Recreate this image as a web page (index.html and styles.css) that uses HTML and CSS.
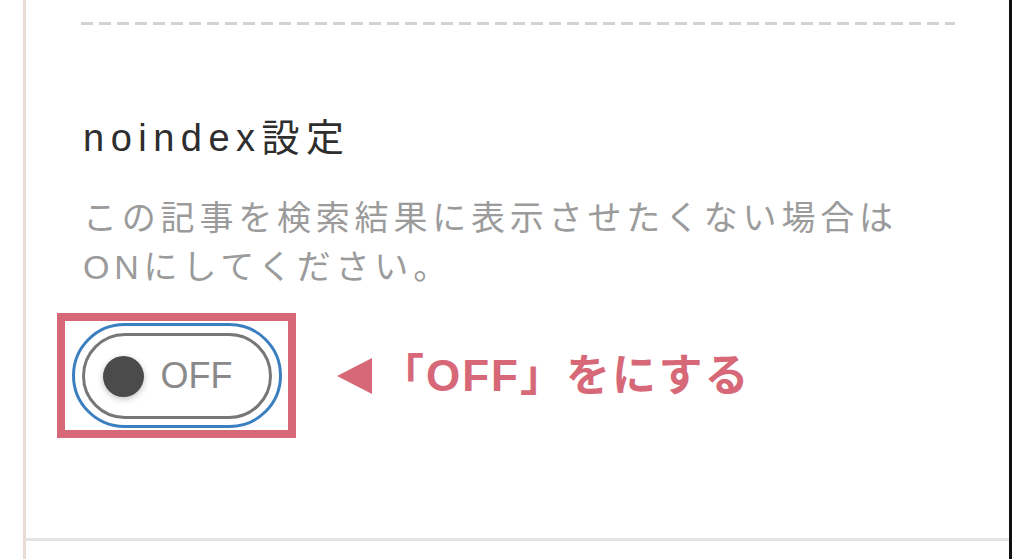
FILE: index.html
```html
<!DOCTYPE html>
<html lang="ja">
<head>
  <meta charset="UTF-8">
  <title>noindex設定</title>
  <link rel="stylesheet" href="styles.css">
</head>
<body>
  <div class="panel">
    <div class="section">
      <div class="divider"></div>
      <h3 class="title">noindex設定</h3>
      <p class="desc">この記事を検索結果に表示させたくない場合は<br>ONにしてください。</p>
      <div class="toggle-row">
        <div class="highlight">
          <div class="focus-ring">
            <div class="switch">
              <span class="knob"></span>
              <span class="state">OFF</span>
            </div>
          </div>
        </div>
        <span class="arrow"></span>
        <span class="note">「OFF」をにする</span>
      </div>
    </div>
  </div>
</body>
</html>
```

FILE: styles.css
```css
body { margin: 0; background: #fff; font-family: "Liberation Sans", "Noto Sans CJK JP", sans-serif; }
.panel { margin-left: 23px; width: 989px; height: 559px; box-sizing: border-box; border-left: 3px solid #e8dcd5; border-right: 3px solid #111; }
.section { height: 541px; box-sizing: border-box; padding: 22px 0 0 55px; border-bottom: 3px solid #e4e4e4; }
.divider { width: 874px; height: 3px; background: repeating-linear-gradient(to right, #d2d2d2 0 12px, transparent 12px 18px); }
.title { margin: 90px 0 0 2px; font-size: 38px; line-height: 46px; font-weight: normal; letter-spacing: 6.5px; color: #2e2e2e; }
.desc { margin: 33px 0 0 2px; font-size: 34px; line-height: 49px; letter-spacing: 4.8px; color: #9b9b9b; }
.toggle-row { display: flex; align-items: center; margin: 21px 0 0 -24px; }
.highlight { width: 239px; height: 125px; box-sizing: border-box; border: 8px solid #d66878; display: flex; align-items: center; justify-content: center; }
.focus-ring { width: 210px; height: 105px; box-sizing: border-box; border: 3px solid #3b7fc1; border-radius: 60px; display: flex; align-items: center; justify-content: center; }
.switch { width: 190px; height: 86px; box-sizing: border-box; border: 3px solid #777; border-radius: 50px; display: flex; align-items: center; padding-left: 18px; }
.knob { width: 41px; height: 41px; border-radius: 50%; background: #4b4b4b; box-shadow: 0 2px 6px rgba(0,0,0,0.25); margin-top: 2px; }
.state { margin-left: 17px; font-size: 36px; line-height: 1; color: #8a8a8a; }
.arrow { width: 0; height: 0; margin-left: 41px; border-top: 18.5px solid transparent; border-bottom: 18.5px solid transparent; border-right: 35px solid #d66878; }
.note { margin-left: 8px; font-size: 44px; line-height: 1; font-weight: bold; letter-spacing: 2px; color: #d66878; }
```
